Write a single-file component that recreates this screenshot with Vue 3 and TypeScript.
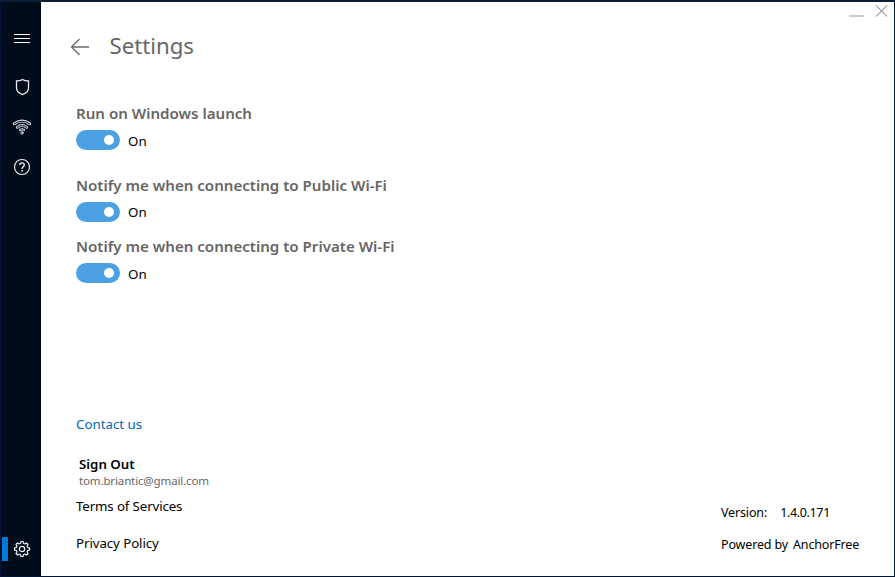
<script setup lang="ts">
import { reactive } from 'vue'

interface Setting {
  id: string
  label: string
  enabled: boolean
}

const settings = reactive<Setting[]>([
  { id: 'launch', label: 'Run on Windows launch', enabled: true },
  { id: 'public', label: 'Notify me when connecting to Public Wi-Fi', enabled: true },
  { id: 'private', label: 'Notify me when connecting to Private Wi-Fi', enabled: true },
])
</script>

<template>
  <div class="window">
    <nav class="sidebar">
      <button class="nav-item menu" aria-label="Menu">
        <svg width="20" height="20" viewBox="0 0 20 20" shape-rendering="crispEdges">
          <path d="M2 6.5h16M2 10.5h16M2 14.5h16" stroke="#fff" />
        </svg>
      </button>
      <button class="nav-item shield" aria-label="Protection">
        <svg width="20" height="20" viewBox="0 0 20 20" fill="none" stroke="#e8ebef" stroke-width="1.3">
          <path d="M10.5 2.5C9 3.5 6.8 3.9 4.5 3.9V11c0 3 2.600 5.300 6 6.600 3.400-1.300 6-3.600 6-6.600V3.900c-2.300 0-4.500-.4-6-1.400z" />
        </svg>
      </button>
      <button class="nav-item" aria-label="Wi-Fi">
        <svg width="20" height="20" viewBox="0 0 20 20" fill="none" stroke-linecap="round">
          <g stroke="#d5d9df" stroke-width="2.900">
            <path d="M2.400 6.800Q10 1.400 17.600 6.800" />
            <path d="M5.300 10.300Q10 6.800 14.700 10.300" />
            <path d="M8 13.100Q10 11.900 12 13.100" stroke-width="2.400" />
          </g>
          <g stroke="#000c1a" stroke-width="1">
            <path d="M2.400 6.800Q10 1.400 17.600 6.800" />
            <path d="M5.300 10.300Q10 6.800 14.700 10.300" />
            <path d="M8 13.100Q10 11.900 12 13.100" stroke-width=".7" />
          </g>
          <circle cx="10" cy="15.900" r="1.100" fill="#000c1a" stroke="#e8ebef" />
        </svg>
      </button>
      <button class="nav-item" aria-label="Help">
        <svg width="20" height="20" viewBox="0 0 20 20" fill="none" stroke="#f2f4f6">
          <circle cx="10" cy="10" r="7.500" stroke-width="1.150" />
          <path d="M7.700 8.100C7.700 6.700 8.700 5.900 10 5.900s2.300.8 2.300 2c0 1.700-2.200 1.900-2.200 3.700v.3" stroke-width="1.350" />
          <path d="M10.100 13v1.500" stroke-width="1.500" />
        </svg>
      </button>
      <button class="nav-item settings active" aria-label="Settings">
        <svg width="20" height="20" viewBox="0 0 20 20" fill="none" stroke="#f2f4f6" stroke-width="1.200" stroke-linejoin="round">
          <path d="M8.600 4.300 8.900 2.500h2.200l.3 1.800 1.600.7 1.500-1.100 1.600 1.600L15 7l.7 1.600 1.800.3v2.200l-1.800.3L15 13l1.100 1.500-1.600 1.600L13 15l-1.600.7-.3 1.800H8.900l-.3-1.800L7 15l-1.500 1.100-1.600-1.600L5 13l-.7-1.600-1.800-.3V8.900l1.800-.3L5 7 3.900 5.500l1.600-1.600L7 5z" />
          <circle cx="10" cy="10" r="2.700" />
        </svg>
      </button>
    </nav>

    <main class="content">
      <div class="window-controls">
        <svg width="15" height="14" viewBox="0 0 15 14"><path d="M0 12h15" stroke="#ccc" stroke-width="2" /></svg>
        <svg width="13" height="14" viewBox="0 0 13 14"><path d="M1 1.500l11 11M12 1.500l-11 11" stroke="#aaa" stroke-width="1.200" /></svg>
      </div>

      <header class="page-header">
        <svg width="20" height="18" viewBox="0 0 20 18" fill="none" stroke="#6b6b6b" stroke-width="1.350">
          <path d="M19 9H1.500M9.500 1l-8 8 8 8" />
        </svg>
        <h1>Settings</h1>
      </header>

      <section class="settings-list">
        <div v-for="s in settings" :key="s.id" class="setting" :class="s.id">
          <h2>{{ s.label }}</h2>
          <div class="control">
            <button class="toggle" :class="{ on: s.enabled }" :aria-label="s.label" @click="s.enabled = !s.enabled">
              <span class="knob"></span>
            </button>
            <span class="state">{{ s.enabled ? 'On' : 'Off' }}</span>
          </div>
        </div>
      </section>

      <footer class="footer">
        <div class="links">
          <a class="contact">Contact us</a>
          <div class="account">
            <a class="sign-out">Sign Out</a>
            <span class="email">tom.briantic@gmail.com</span>
          </div>
          <a class="terms">Terms of Services</a>
          <a class="privacy">Privacy Policy</a>
        </div>
        <div class="about">
          <div class="about-row version"><span>Version:</span><span class="number">1.4.0.171</span></div>
          <div class="about-row powered"><span>Powered by</span><span>AnchorFree</span></div>
        </div>
      </footer>
    </main>
  </div>
</template>

<style>
body {
  background: #fff;
}
</style>

<style scoped>
.window {
  box-sizing: border-box;
  display: flex;
  width: 895px;
  height: 577px;
  border: 1px solid #001433;
  border-top: 2px solid #0b1e34;
  background: #fff;
  color: #000;
  font-family: "Segoe UI", "Noto Sans", sans-serif;
  font-size: 13.3px;
  line-height: 20px;
  white-space: nowrap;
}
button {
  padding: 0;
  border: 0;
  background: none;
}
svg {
  display: block;
}
.sidebar {
  box-sizing: border-box;
  display: flex;
  flex-direction: column;
  flex: none;
  width: 40px;
  padding: 16px 0 15px;
  background: #000c1a;
}
.nav-item {
  box-sizing: border-box;
  display: flex;
  align-items: center;
  height: 40px;
  padding-left: 11px;
}
.menu {
  margin-bottom: 9px;
}
.settings {
  height: 24px;
  margin: auto 0 0 1px;
  padding-left: 4px;
  border-left: 6px solid #0078d7;
}
.content {
  display: flex;
  flex-direction: column;
  flex: 1;
}
.window-controls {
  display: flex;
  justify-content: flex-end;
  gap: 11px;
  height: 14px;
  padding: 2px 6px 0 0;
}
.page-header {
  display: flex;
  align-items: center;
  height: 30px;
  margin-top: 14px;
  padding-left: 29px;
}
h1,
h2 {
  margin: 0;
}
h1 {
  margin-left: 19.500px;
  padding-bottom: 2px;
  color: #666;
  font-size: 22.200px;
  font-weight: 400;
  line-height: 28px;
}
.settings-list {
  margin-top: 41px;
  padding-left: 35px;
}
.setting {
  height: 61px;
}
.setting.launch {
  height: 72px;
}
h2 {
  color: #666;
  font-size: 15.100px;
  font-weight: 600;
  line-height: 20px;
}
.control {
  display: flex;
  gap: 8px;
  margin-top: 7px;
}
.state {
  line-height: 20px;
}
.launch .state,
.private .state {
  line-height: 22px;
  height: 20px;
}
.toggle {
  box-sizing: border-box;
  display: flex;
  align-items: center;
  width: 44px;
  height: 20px;
  padding: 0 6px;
  border-radius: 10px;
  background: #999;
}
.toggle.on {
  justify-content: flex-end;
  background: #4ca0e4;
}
.knob {
  width: 10.500px;
  height: 10.500px;
  border-radius: 50%;
  background: #fff;
}
.footer {
  display: flex;
  justify-content: space-between;
  margin-top: auto;
  padding: 0 35px 21px;
}
.links {
  display: flex;
  flex-direction: column;
  padding-bottom: 2px;
}
.contact {
  color: #0067b8;
}
.account {
  display: flex;
  flex-direction: column;
  margin-top: 20px;
  padding-left: 3px;
}
.sign-out {
  font-weight: 600;
}
.email {
  color: #666;
  font-size: 11.500px;
  letter-spacing: -0.130px;
  line-height: 14px;
}
.terms {
  margin-top: 8px;
  letter-spacing: -0.130px;
}
.privacy {
  margin-top: 17px;
  letter-spacing: -0.080px;
}
.about {
  display: flex;
  flex-direction: column;
  justify-content: flex-end;
  gap: 12px;
  width: 138px;
  font-size: 12.500px;
  letter-spacing: -0.150px;
}
.about-row {
  display: flex;
  gap: 5px;
}
.about-row.version {
  gap: 13px;
}
.about-row .number {
  letter-spacing: -0.350px;
}
</style>
